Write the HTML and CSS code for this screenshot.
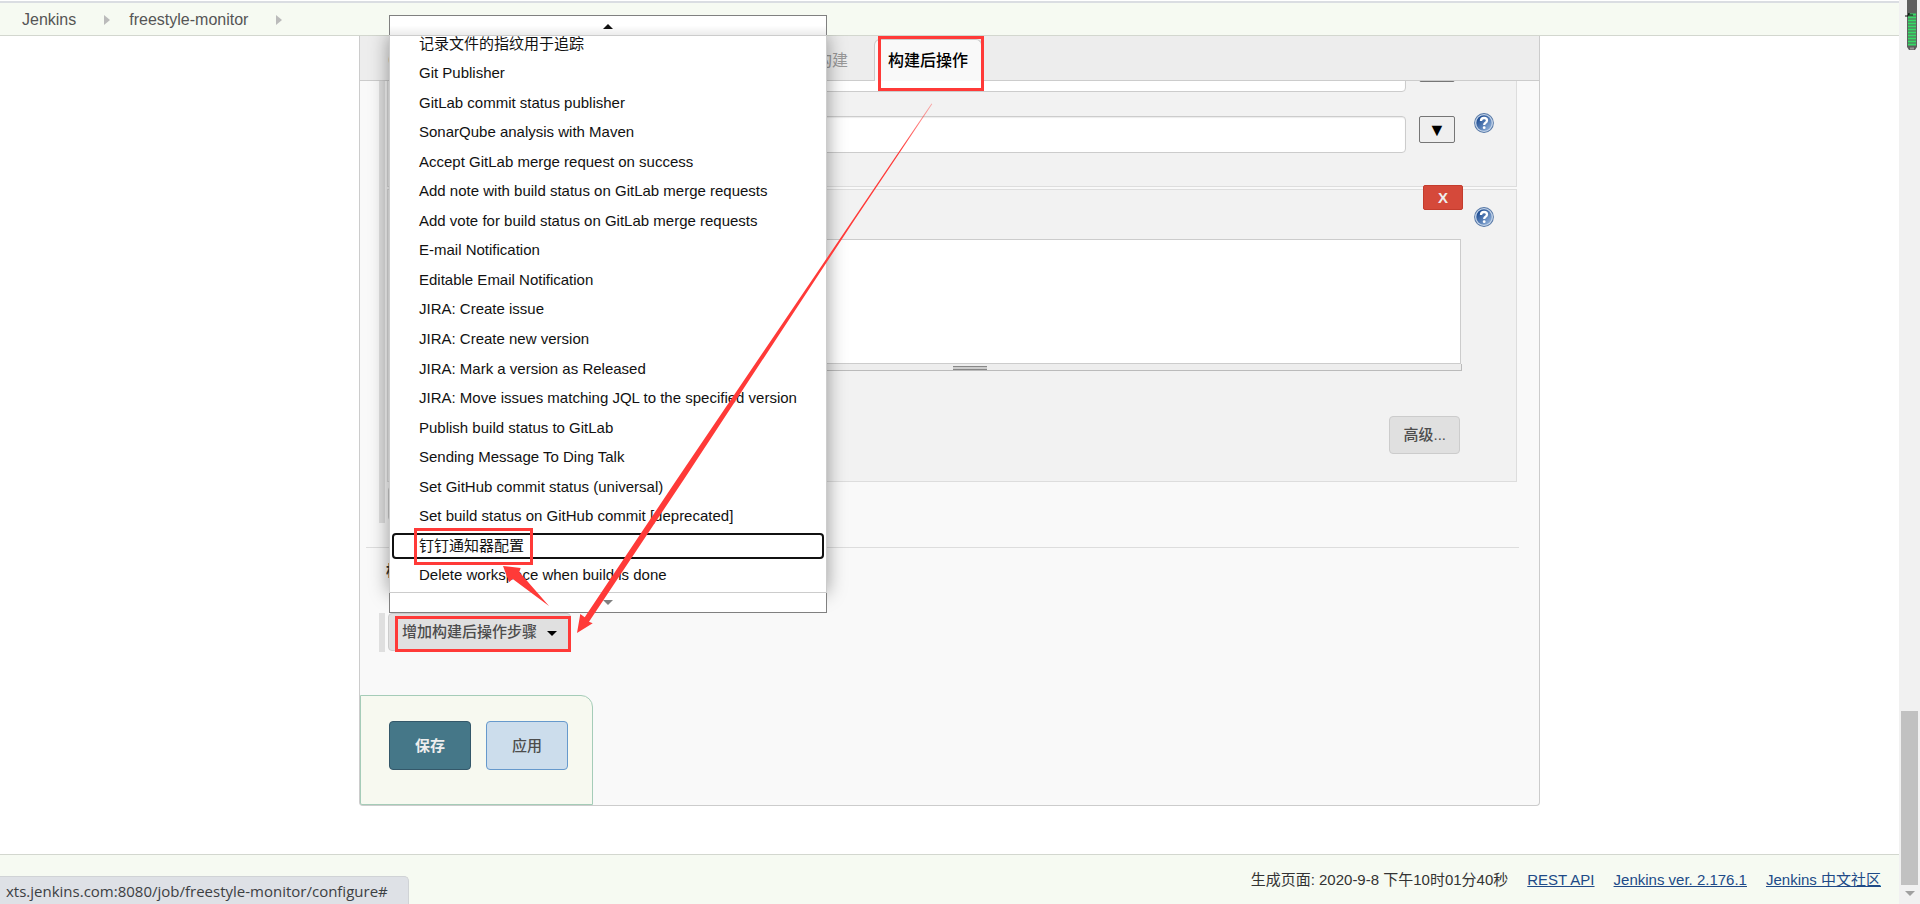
FILE: index.html
```html
<!DOCTYPE html>
<html lang="zh-CN">
<head>
<meta charset="utf-8">
<title>freestyle-monitor Config [Jenkins]</title>
<link rel="stylesheet" href="styles.css">
</head>
<body>
<svg class="defs" width="0" height="0" aria-hidden="true">
  <defs>
    <linearGradient id="ball" x1="0" y1="0" x2="1" y2="1">
      <stop offset="0.15" stop-color="#1d4c92"/><stop offset="1" stop-color="#9dbbe0"/>
    </linearGradient>
    <linearGradient id="fade" gradientUnits="userSpaceOnUse" x1="932" y1="104" x2="900" y2="152">
      <stop offset="0" stop-color="#ff3a38" stop-opacity="0.4"/><stop offset="1" stop-color="#ff3a38"/>
    </linearGradient>
    <symbol id="help" viewBox="0 0 20 20">
      <circle cx="10" cy="10" r="9.900" fill="#5577a6"/>
      <circle cx="10" cy="10" r="9" fill="#c3d3e8"/>
      <circle cx="10" cy="10" r="7.700" fill="url(#ball)"/>
      <path d="M7 8Q7 5 10 5Q13 5 13 7.400Q13 8.700 11.500 9.700Q10.200 10.500 10.200 12" fill="none" stroke="#fff" stroke-width="2.300"/>
      <circle cx="10.200" cy="14.700" r="1.400" fill="#fff"/>
    </symbol>
  </defs>
</svg>

<div class="page">
  <header class="breadcrumbs">
    <nav class="crumbs" aria-label="breadcrumb">
      <a href="#">Jenkins</a><span class="chevron"></span>
      <a href="#">freestyle-monitor</a><span class="chevron"></span>
    </nav>
  </header>

  <main class="main">
    <div class="config">
      <nav class="tabs" aria-label="sections">
        <a class="tab" href="#">General</a>
        <a class="tab" href="#">源码管理</a>
        <a class="tab" href="#">构建触发器</a>
        <a class="tab" href="#">构建环境</a>
        <a class="tab" href="#">构建</a>
        <a class="tab tab-active" href="#">构建后操作</a>
      </nav>

      <section class="group">
        <div class="steps">
          <div class="box box-clipped">
            <div class="row">
              <input class="field" type="text" aria-label="Goals">
              <button class="expand" type="button" aria-label="Expand"></button>
              <span class="help-space"></span>
            </div>
            <div class="row">
              <input class="field" type="text" aria-label="Properties">
              <button class="expand" type="button">▼</button>
              <svg class="help" role="img" aria-label="Help"><use href="#help"/></svg>
            </div>
          </div>
          <div class="box box-shell">
            <button class="delete" type="button">X</button>
            <div class="box-head"><svg class="help" role="img" aria-label="Help"><use href="#help"/></svg></div>
            <div class="editor">
              <textarea class="command" aria-label="Command"></textarea>
              <div class="resizer"><span class="grip"></span></div>
            </div>
            <div class="actions"><button class="btn btn-advanced" type="button">高级...</button></div>
          </div>
          <button class="btn btn-step" type="button" aria-label="Add build step"><span class="caret"></span></button>
        </div>
      </section>

      <h2 class="heading">构建后操作</h2>

      <section class="group group-post">
        <div class="dropdown">
          <button class="btn btn-add" type="button">增加构建后操作步骤<span class="caret"></span></button>
          <div class="menu">
            <div class="scroller scroller-up"><span class="arrow-up"></span></div>
            <div class="menu-body">
              <ul class="menu-list">
                <li><a href="#">记录文件的指纹用于追踪</a></li>
                <li><a href="#">Git Publisher</a></li>
                <li><a href="#">GitLab commit status publisher</a></li>
                <li><a href="#">SonarQube analysis with Maven</a></li>
                <li><a href="#">Accept GitLab merge request on success</a></li>
                <li><a href="#">Add note with build status on GitLab merge requests</a></li>
                <li><a href="#">Add vote for build status on GitLab merge requests</a></li>
                <li><a href="#">E-mail Notification</a></li>
                <li><a href="#">Editable Email Notification</a></li>
                <li><a href="#">JIRA: Create issue</a></li>
                <li><a href="#">JIRA: Create new version</a></li>
                <li><a href="#">JIRA: Mark a version as Released</a></li>
                <li><a href="#">JIRA: Move issues matching JQL to the specified version</a></li>
                <li><a href="#">Publish build status to GitLab</a></li>
                <li><a href="#">Sending Message To Ding Talk</a></li>
                <li><a href="#">Set GitHub commit status (universal)</a></li>
                <li><a href="#">Set build status on GitHub commit [deprecated]</a></li>
                <li><a class="focused" href="#">钉钉通知器配置</a></li>
                <li><a href="#">Delete workspace when build is done</a></li>
              </ul>
            </div>
            <div class="scroller scroller-down"><span class="arrow-down"></span></div>
          </div>
        </div>
      </section>

      <div class="save-bar">
        <button class="btn btn-save" type="submit">保存</button>
        <button class="btn btn-apply" type="button">应用</button>
      </div>
    </div>
  </main>

  <footer class="footer">
    <span>生成页面: 2020-9-8 下午10时01分40秒</span>
    <a href="#">REST API</a>
    <a href="#">Jenkins ver. 2.176.1</a>
    <a href="#">Jenkins 中文社区</a>
  </footer>
</div>

<aside class="scrollbar" aria-hidden="true">
  <span class="thumb"></span>
  <span class="scroll-down"></span>
</aside>

<div class="status">xts.jenkins.com:8080/job/freestyle-monitor/configure#</div>

<svg class="battery" width="14" height="56" viewBox="0 0 14 56" aria-hidden="true">
  <path d="M2 0H12V47L10 50H4L2 47Z" fill="#5f5f5f"/>
  <path d="M3 14.5H11M3 17.5H11M3 20.5H11M3 23.5H11M3 26.5H11M3 29.5H11M3 32.5H11M3 35.5H11M3 38.5H11M3 41.5H11M3 44.5H11" stroke="#35dc66" stroke-width="2"/>
  <path d="M0 16H3L4 13V15H8" fill="none" stroke="#111"/>
  <path d="M5 48.500H9" stroke="#999" stroke-width="2"/>
</svg>

<svg class="marks" width="1920" height="904" viewBox="0 0 1920 904" aria-hidden="true">
  <g fill="none" stroke="#ff3a38" stroke-width="3">
    <rect x="879.500" y="37.500" width="103" height="52"/>
    <rect x="415.500" y="529.500" width="116" height="34"/>
    <rect x="396.500" y="617.500" width="173" height="33"/>
  </g>
  <path d="M932.300 104L854.500 220L683.500 480L589 621.700L592.700 623.300L577 633L580.300 614L584.700 617.300L676.500 480L853 219.500L931.500 103.500Z" fill="url(#fade)"/>
  <path d="M503 566L520.700 568L519.300 572L549 606L512.700 579L509 582.300Z" fill="#ff3a38"/>
</svg>
</body>
</html>
```

FILE: styles.css
```css
* { box-sizing: border-box; }

body {
  margin: 0;
  position: relative;
  display: grid;
  grid-template-columns: minmax(0, 1fr) 21px;
  min-height: 100vh;
  overflow: hidden;
  background: #fff;
  color: #333;
  font: 15px/20px "Liberation Sans", "Noto Sans CJK SC", sans-serif;
}

button, input, textarea { font: inherit; margin: 0; }
.defs { position: absolute; }

.page { display: flex; flex-direction: column; min-height: 100vh; }

/* Breadcrumbs */
.breadcrumbs {
  margin-top: 1px;
  border-top: 2px solid #dadde2;
  border-bottom: 1px solid #d3d7cf;
  background: #f6faf2;
}
.crumbs {
  display: flex;
  align-items: center;
  height: 32px;
  padding: 1px 0 0 22px;
  font-size: 16px;
}
.crumbs a { color: #555; text-decoration: none; }
.chevron {
  width: 6px;
  margin: 0 19px 0 28px;
  border: solid transparent;
  border-width: 5px 0 5px 6px;
  border-left-color: #bbb;
}

/* Configuration panel */
.main { padding: 0 359px; }
.config {
  display: flow-root;
  border: 1px solid #ccc;
  border-top: 0;
  border-radius: 0 0 4px 4px;
  background: #f9f9f9;
}
.tabs {
  display: flex;
  align-items: flex-end;
  height: 45px;
  padding-left: 14px;
  border-bottom: 1px solid #ccc;
  background: #ededed;
}
.tab {
  margin-bottom: -1px;
  padding: 10px 13px;
  border: 1px solid transparent;
  border-bottom: 0;
  border-radius: 6px 6px 0 0;
  margin-right: 12px;
  color: #999;
  font-size: 16px;
  line-height: 21px;
  text-decoration: none;
}
.tab:first-child { margin-right: 15px; }
.tab-active { border-color: #ccc; background: #f9f9f9; color: #000; font-weight: 500; }

.group { margin-left: 19px; border-left: 6px solid #dfdfdf; padding: 0 22px 0 2px; }
.steps { display: flow-root; padding-bottom: 2px; }
.box {
  position: relative;
  border: 1px solid #ddd;
  background: #f2f2f2;
}
.box-clipped {
  display: flex;
  flex-direction: column;
  gap: 24px;
  overflow: hidden;
  border-top: 0;
  margin-bottom: 2px;
  padding: 0 22px 33px 180px;
}
.row { display: flex; align-items: flex-start; }
.row:first-child { margin-top: -26px; }
.field {
  flex: 1;
  min-width: 0;
  height: 37px;
  padding: 6px;
  border: 1px solid #ccc;
  border-radius: 4px;
  background: #fff;
  box-shadow: inset 0 1px 1px rgba(0, 0, 0, 0.08);
}
.expand {
  width: 36px;
  height: 27px;
  margin: 0 19px 0 13px;
  padding: 0;
  border: 1px solid #767676;
  border-radius: 2px;
  background: #efefef;
  color: #000;
  font-size: 18px;
}
.help { display: block; width: 20px; height: 20px; }
.row .help { margin-top: -3px; }
.help-space { width: 20px; }

.box-shell { padding: 17px 22px 27px 91px; }
.box-head { display: flex; justify-content: flex-end; }
.delete {
  position: absolute;
  top: -5px;
  right: 53px;
  width: 40px;
  height: 25px;
  padding: 0;
  border: 1px solid #c43c2d;
  border-radius: 2px;
  background: #d5493a;
  color: #eee;
  font-weight: bold;
}
.editor { margin: 12px 32px 0 0; }
.command {
  display: block;
  width: calc(100% - 1px);
  height: 125px;
  border: 1px solid #ccc;
  background: #fff;
  resize: none;
}
.resizer {
  display: flex;
  justify-content: center;
  height: 7px;
  padding: 2px 0 0;
  border: solid #bbb;
  border-width: 0 1px 1px 0;
  background: #ededed;
}
.grip { width: 34px; height: 4px; border: solid #888; border-width: 1px 0; background: #ccc; }
.actions { display: flex; justify-content: flex-end; margin: 45px 34px 0 0; }

.btn {
  height: 38px;
  padding: 0 13px;
  border: 1px solid #ccc;
  border-radius: 4px;
  background: #e0e0e0;
  color: #4d4d4d;
  font-weight: 500;
}
.btn-step { display: block; width: 150px; height: 35px; margin: 4px 0 0 1px; }
.caret {
  display: inline-block;
  margin-left: 10px;
  border: solid transparent;
  border-width: 5px 5px 0;
  border-top-color: #000;
  vertical-align: middle;
}

.heading {
  margin: 24px 20px 0 6px;
  padding: 12px 0 0 20px;
  border-top: 1px solid #ddd;
  font-size: 15px;
  line-height: 22px;
}
.group-post { margin-top: 31px; padding-left: 3px; }
.dropdown { position: relative; width: fit-content; padding-bottom: 1px; }
.btn-add { display: block; }

/* Pop-up list */
.menu { position: absolute; bottom: 100%; left: 1px; width: 438px; z-index: 2; }
.scroller {
  display: flex;
  align-items: center;
  justify-content: center;
  height: 20px;
  border: 1px solid #808080;
  background: #fff;
}
.scroller-up { border-bottom: 0; background: linear-gradient(#fff 50%, #ececec); padding-top: 1px; }
.scroller-down { border-top: 0; position: relative; }
.arrow-up { border: solid transparent; border-width: 0 5px 5px; border-bottom-color: #111; }
.arrow-down { border: solid transparent; border-width: 5px 5px 0; border-top-color: #808080; }
.menu-body {
  height: 558px;
  padding: 0 2px;
  overflow: hidden;
  border: 1px solid #ccc;
  background: #fff;
  box-shadow: 0 0 18px rgba(0, 0, 0, 0.4);
  clip-path: inset(0 -30px -30px -30px);
}
.menu-list {
  display: grid;
  grid-auto-rows: 1fr;
  height: 561px;
  margin: -7px 0 0;
  padding: 0;
  list-style: none;
}
.menu-list li { display: flex; align-items: center; min-height: 0; }
.menu-list a {
  flex: 1;
  padding-left: 25px;
  border: 2px solid transparent;
  border-radius: 4px;
  color: #111;
  line-height: 22px;
  text-decoration: none;
  white-space: nowrap;
}
.menu-list .focused { border-color: #111; }

.save-bar {
  display: flex;
  gap: 15px;
  width: fit-content;
  margin-top: 43px;
  padding: 25px 24px 34px 28px;
  border: 1px solid #a5ccb8;
  border-radius: 0 12px 0 2px;
  background: #f7f9f0;
}
.btn-save, .btn-apply { height: 49px; padding: 0 25px; }
.btn-save { border-color: #34586a; background: #457788; color: #eee; font-weight: bold; }
.btn-apply { border-color: #6699cc; background: #ccddec; }

.footer {
  display: flex;
  justify-content: flex-end;
  gap: 19px;
  margin-top: auto;
  padding: 15px 18px 14px;
  border-top: 1px solid #d3d7cf;
  background: #f6faf2;
}
.footer a { color: #204a87; }

/* Browser furniture */
.scrollbar { display: flex; flex-direction: column; align-items: center; background: #f1f1f1; }
.thumb { width: 17px; height: 174px; margin-top: auto; background: #c1c1c1; }
.scroll-down { margin: 6px 0 8px; border: solid transparent; border-width: 5px 5px 0; border-top-color: #a0a0a0; }
.status {
  position: absolute;
  left: 0;
  bottom: 0;
  padding: 4px 20px 3px 6px;
  border: solid #d0d3d6;
  border-width: 1px 1px 0 0;
  border-radius: 0 5px 0 0;
  background: #dee1e6;
  color: #3c4043;
  font: 15px/20px "Open Sans", sans-serif;
}
.battery { position: absolute; top: 0; right: 1px; }
.marks { position: absolute; top: 0; left: 0; z-index: 3; pointer-events: none; }
```
